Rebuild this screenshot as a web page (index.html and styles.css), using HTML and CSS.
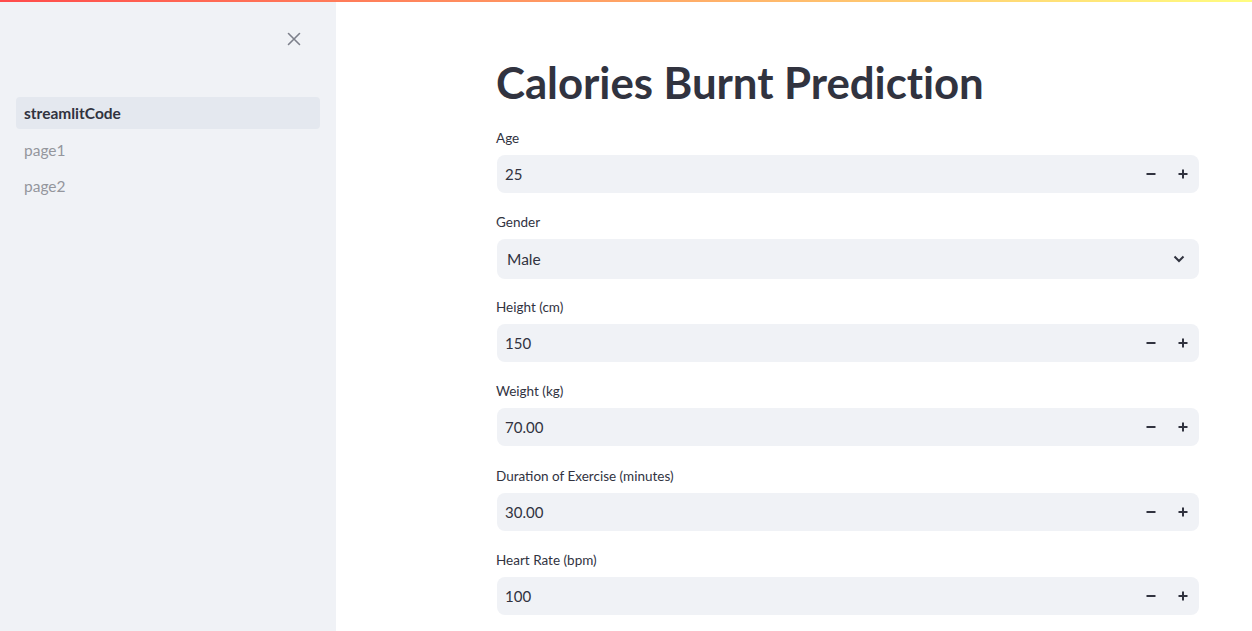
FILE: index.html
```html
<!DOCTYPE html>
<html lang="en">
<head>
<meta charset="utf-8">
<title>Calories Burnt Prediction</title>
<link rel="stylesheet" href="styles.css">
</head>
<body>
<div class="decoration"></div>
<aside class="sidebar">
  <div class="sidebar-header">
    <button class="close-btn" aria-label="Close sidebar">
      <svg width="14" height="14" viewBox="0 0 14 14"><path d="M1.5 1.5L12.5 12.5M12.5 1.5L1.5 12.5" stroke="#7d808b" stroke-width="1.6" fill="none" stroke-linecap="round"/></svg>
    </button>
  </div>
  <nav class="nav">
    <a class="nav-item active">streamlitCode</a>
    <a class="nav-item">page1</a>
    <a class="nav-item">page2</a>
  </nav>
</aside>
<main class="main">
  <div class="block">
    <h1 class="title">Calories Burnt Prediction</h1>

    <div class="field">
      <label class="label">Age</label>
      <div class="numbox">
        <span class="value">25</span>
        <span class="step"><svg width="10" height="10" viewBox="0 0 10 10"><path d="M0.5 5H9.5" stroke="#31333f" stroke-width="2"/></svg></span>
        <span class="step"><svg width="10" height="10" viewBox="0 0 10 10"><path d="M0.5 5H9.5M5 0.5V9.5" stroke="#31333f" stroke-width="2"/></svg></span>
      </div>
    </div>

    <div class="field field-select">
      <label class="label">Gender</label>
      <div class="selectbox">
        <span class="value sel">Male</span>
        <span class="chev"><svg width="12" height="8" viewBox="0 0 12 8"><path d="M1.5 1.5L6 6L10.5 1.5" stroke="#31333f" stroke-width="2" fill="none"/></svg></span>
      </div>
    </div>

    <div class="field">
      <label class="label">Height (cm)</label>
      <div class="numbox">
        <span class="value">150</span>
        <span class="step"><svg width="10" height="10" viewBox="0 0 10 10"><path d="M0.5 5H9.5" stroke="#31333f" stroke-width="2"/></svg></span>
        <span class="step"><svg width="10" height="10" viewBox="0 0 10 10"><path d="M0.5 5H9.5M5 0.5V9.5" stroke="#31333f" stroke-width="2"/></svg></span>
      </div>
    </div>

    <div class="field">
      <label class="label">Weight (kg)</label>
      <div class="numbox">
        <span class="value">70.00</span>
        <span class="step"><svg width="10" height="10" viewBox="0 0 10 10"><path d="M0.5 5H9.5" stroke="#31333f" stroke-width="2"/></svg></span>
        <span class="step"><svg width="10" height="10" viewBox="0 0 10 10"><path d="M0.5 5H9.5M5 0.5V9.5" stroke="#31333f" stroke-width="2"/></svg></span>
      </div>
    </div>

    <div class="field">
      <label class="label">Duration of Exercise (minutes)</label>
      <div class="numbox">
        <span class="value">30.00</span>
        <span class="step"><svg width="10" height="10" viewBox="0 0 10 10"><path d="M0.5 5H9.5" stroke="#31333f" stroke-width="2"/></svg></span>
        <span class="step"><svg width="10" height="10" viewBox="0 0 10 10"><path d="M0.5 5H9.5M5 0.5V9.5" stroke="#31333f" stroke-width="2"/></svg></span>
      </div>
    </div>

    <div class="field">
      <label class="label">Heart Rate (bpm)</label>
      <div class="numbox">
        <span class="value">100</span>
        <span class="step"><svg width="10" height="10" viewBox="0 0 10 10"><path d="M0.5 5H9.5" stroke="#31333f" stroke-width="2"/></svg></span>
        <span class="step"><svg width="10" height="10" viewBox="0 0 10 10"><path d="M0.5 5H9.5M5 0.5V9.5" stroke="#31333f" stroke-width="2"/></svg></span>
      </div>
    </div>
  </div>
</main>
</body>
</html>
```

FILE: styles.css
```css
* { box-sizing: border-box; }
html, body { margin: 0; padding: 0; }
body {
  display: flex;
  height: 100vh;
  overflow: hidden;
  font-family: Lato, "Open Sans", sans-serif;
  color: #31333f;
  background: #ffffff;
}
.decoration {
  position: absolute;
  top: 0;
  left: 0;
  right: 0;
  height: 2px;
  background: linear-gradient(90deg, #ff4b4b, #fffd80);
  z-index: 10;
}
.sidebar {
  width: 336px;
  flex: none;
  background: #f0f2f6;
  display: flex;
  flex-direction: column;
}
.sidebar-header {
  height: 78px;
  display: flex;
  align-items: center;
  justify-content: flex-end;
  padding-right: 35px;
}
.close-btn {
  border: none;
  background: transparent;
  padding: 0;
  width: 14px;
  height: 14px;
  display: flex;
}
.nav {
  margin-top: 19px;
  padding: 0 16px;
  display: flex;
  flex-direction: column;
  gap: 4.5px;
}
.nav-item {
  height: 32px;
  line-height: 32px;
  padding-left: 8px;
  border-radius: 4px;
  font-size: 15.5px;
  color: #94969d;
}
.nav-item.active {
  background: #e4e8ef;
  color: #31333f;
  font-weight: 700;
}
.main {
  flex: 1;
  padding: 56px 53px 0 160px;
}
.block {
  display: flex;
  flex-direction: column;
}
.title {
  margin: 0 0 19px;
  font-size: 43.8px;
  line-height: 53px;
  font-weight: 700;
  letter-spacing: -0.05px;
  color: #31333f;
}
.field {
  display: flex;
  flex-direction: column;
  margin-bottom: 19.2px;
}
.field-select { margin-bottom: 18px; }
.label {
  font-size: 13.5px;
  line-height: 20px;
  margin-bottom: 7px;
  color: #31333f;
}
.numbox, .selectbox {
  display: flex;
  align-items: center;
  background: #f0f2f6;
  border-radius: 8px;
  margin-left: 1px;
}
.numbox { height: 38px; }
.selectbox { height: 40px; }
.value {
  flex: 1;
  padding-left: 8px;
  font-size: 15px;
}
.value.sel { padding-left: 10px; font-size: 15.5px; }
.step {
  width: 32px;
  height: 38px;
  display: flex;
  align-items: center;
  justify-content: center;
}
.chev {
  width: 40px;
  display: flex;
  justify-content: center;
}
```
